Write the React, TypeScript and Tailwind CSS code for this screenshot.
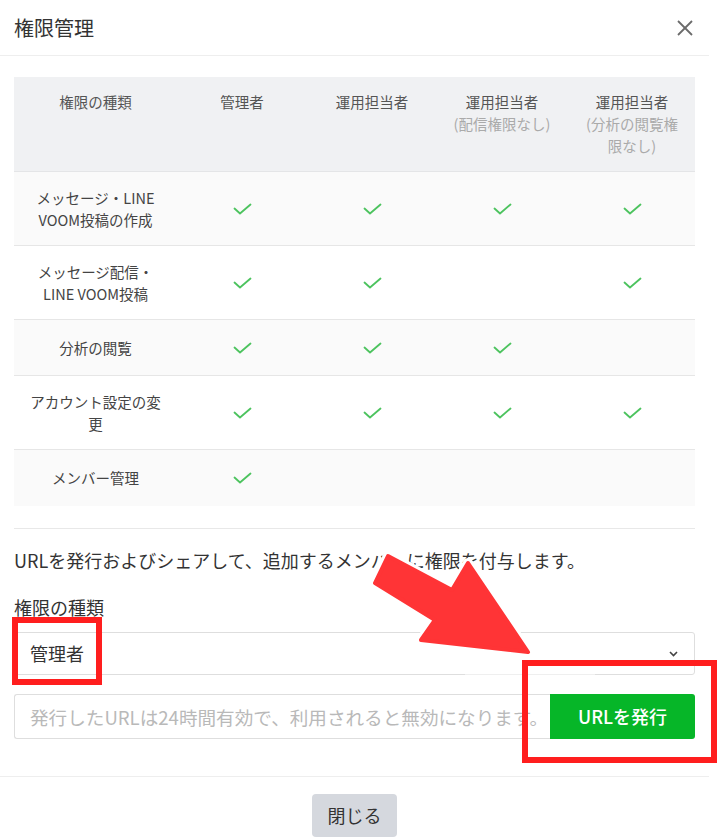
import React from "react";

type Row = {
  label: string[];
  checks: boolean[];
  tall: boolean;
};

const rows: Row[] = [
  { label: ["メッセージ・LINE", "VOOM投稿の作成"], checks: [true, true, true, true], tall: true },
  { label: ["メッセージ配信・", "LINE VOOM投稿"], checks: [true, true, false, true], tall: true },
  { label: ["分析の閲覧"], checks: [true, true, true, false], tall: false },
  { label: ["アカウント設定の変", "更"], checks: [true, true, true, true], tall: true },
  { label: ["メンバー管理"], checks: [true, false, false, false], tall: false },
];

function Check() {
  return (
    <svg width="19" height="12" viewBox="0 0 19 12" fill="none">
      <polyline points="1.5,5.5 7,10.5 17.5,1.5" stroke="#4cc35e" strokeWidth="1.8" strokeLinecap="round" strokeLinejoin="round" />
    </svg>
  );
}

function Annotations() {
  const arrow = "388,556 452,590 468,563 528,652 421,640 435,620 375,583";
  return (
    <svg className="absolute left-0 top-0 pointer-events-none" width="726" height="838" viewBox="0 0 726 838">
      {/* gaps in borders left by the annotation */}
      <line x1="420" y1="630" x2="608" y2="630" stroke="#fff" strokeWidth="3" />
      <line x1="465" y1="673" x2="595" y2="673" stroke="#fff" strokeWidth="3" />
      <line x1="502" y1="692" x2="552" y2="692" stroke="#fff" strokeWidth="3" />
      <polygon points={arrow} fill="#fff" stroke="#fff" strokeWidth="10" strokeLinejoin="round" />
      <polygon points={arrow} fill="#ff3436" stroke="#ff3436" strokeWidth="4" strokeLinejoin="round" />
      <rect x="15" y="620" width="84" height="62" fill="none" stroke="#ff1e1e" strokeWidth="6" />
      <rect x="525" y="663" width="189" height="97" fill="none" stroke="#ff1e1e" strokeWidth="6" />
    </svg>
  );
}

export default function App() {
  return (
    <div className="relative w-[726px] h-[838px] overflow-hidden bg-white text-[#333] font-['Noto_Sans_CJK_JP','Noto_Sans',sans-serif]">
      <div className="w-[709px]">
        <div className="flex h-[56px] items-center justify-between pl-[14px] pr-[15px] border-b border-[#eeeeee]">
          <h1 className="text-[20px] leading-none text-[#333]">権限管理</h1>
          <svg width="18" height="18" viewBox="0 0 18 18" fill="none">
            <line x1="2" y1="2" x2="16" y2="16" stroke="#6b6b6b" strokeWidth="1.8" />
            <line x1="16" y1="2" x2="2" y2="16" stroke="#6b6b6b" strokeWidth="1.8" />
          </svg>
        </div>

        <div className="px-[14px] pt-[21px]">
          <div className="text-[14.5px] text-[#555]">
            <div className="grid grid-cols-[163px_repeat(4,130px)] bg-[#f0f1f3] border-b border-[#e4e5e7] py-[14px] leading-[22px] text-center">
              <div>権限の種類</div>
              <div>管理者</div>
              <div>運用担当者</div>
              <div className="flex flex-col">
                <span>運用担当者</span>
                <span className="text-[#aaa]">(配信権限なし)</span>
              </div>
              <div className="flex flex-col">
                <span>運用担当者</span>
                <span className="text-[#aaa]">(分析の閲覧権</span>
                <span className="text-[#aaa]">限なし)</span>
              </div>
            </div>

            {rows.map((row, i) => (
              <div
                key={i}
                className={`grid grid-cols-[163px_repeat(4,130px)] items-center leading-[21.5px] ${
                  row.tall ? "h-[74px]" : "h-[56px]"
                } ${i % 2 === 0 ? "bg-[#fafafa]" : "bg-white"} ${i < rows.length - 1 ? "border-b border-[#e6e6e6]" : ""}`}
              >
                <div className="flex flex-col items-center text-center text-[#444]">
                  {row.label.map((l) => (
                    <span key={l}>{l}</span>
                  ))}
                </div>
                {row.checks.map((c, j) => (
                  <div key={j} className="flex justify-center">
                    {c && <Check />}
                  </div>
                ))}
              </div>
            ))}
          </div>

          <div className="mt-[22px] border-t border-[#e8e8e8] pt-[18px] text-[18px]">
            <p className="leading-[26px]">URLを発行およびシェアして、追加するメンバーに権限を付与します。</p>
            <p className="mt-[21px] leading-[26px]">権限の種類</p>

            <div className="mt-[12px] flex h-[43px] items-center justify-between rounded-[3px] border border-[#dedede] pl-[15px] pr-[16px]">
              <span>管理者</span>
              <svg width="9" height="6" viewBox="0 0 9 6" fill="none">
                <polyline points="1,1 4.5,4.5 8,1" stroke="#444" strokeWidth="1.6" />
              </svg>
            </div>

            <div className="mt-[19px] flex h-[45px]">
              <input
                readOnly
                placeholder="発行したURLは24時間有効で、利用されると無効になります。"
                className="h-full min-w-0 flex-1 rounded-l-[3px] border border-r-0 border-[#dedede] pl-[15px] text-[18.6px] outline-none placeholder:text-[#b9b9b9]"
              />
              <button className="h-full w-[145px] rounded-r-[3px] bg-[#06b628] text-[18px] font-medium text-white">
                URLを発行
              </button>
            </div>
          </div>
        </div>

        <div className="mt-[37px] border-t border-[#eeeeee] pt-[17px] flex justify-center">
          <button className="h-[43px] w-[85px] rounded-[4px] bg-[#d5d8de] text-[18px] text-[#333]">閉じる</button>
        </div>
      </div>

      <Annotations />
    </div>
  );
}
